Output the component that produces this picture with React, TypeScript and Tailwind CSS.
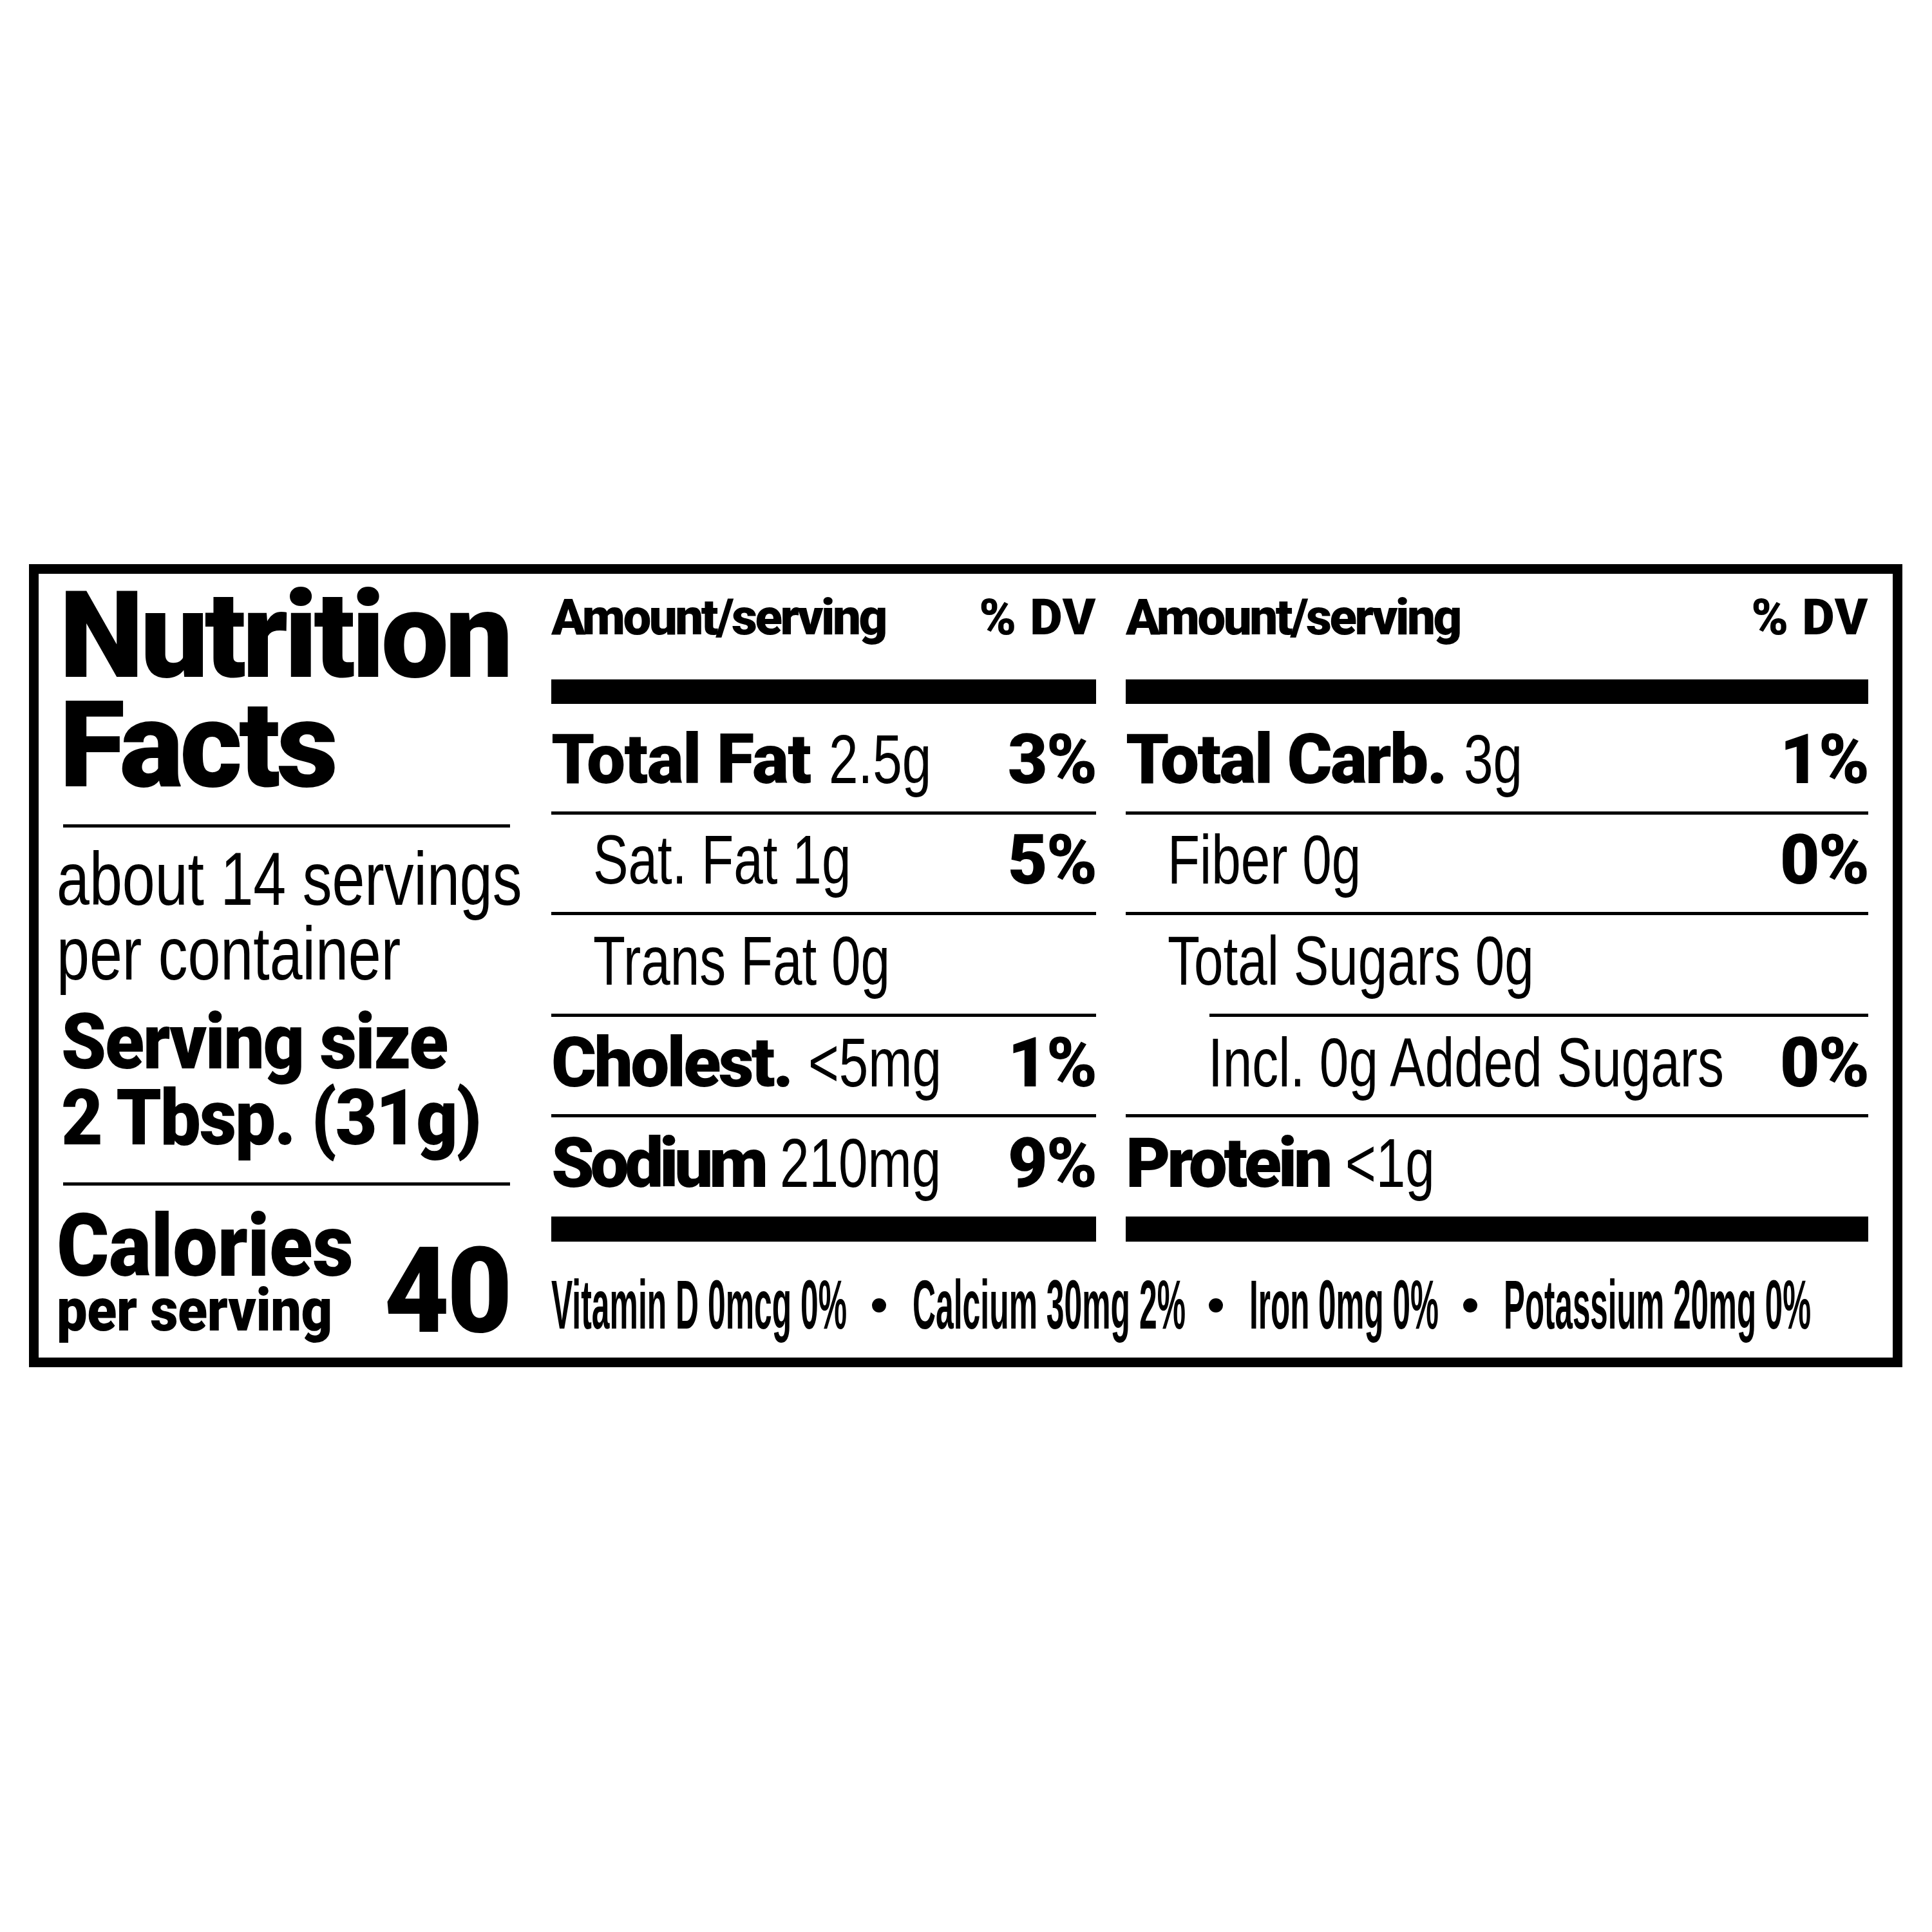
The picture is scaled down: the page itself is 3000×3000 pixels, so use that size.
const heavy = "font-['Roboto','Liberation_Sans',sans-serif] font-black";
const plain = "font-['Liberation_Sans','Arial',sans-serif] font-normal";
const plainBold = "font-['Liberation_Sans','Arial',sans-serif] font-bold";

const Rule = ({ className = "" }: { className?: string }) => <div className={`h-[5px] bg-black ${className}`} />;

type RowProps = {
  name?: string;
  nameTrack?: string;
  amount: string;
  dv?: string;
  className: string;
};

// one nutrient line: bold name, condensed amount, bold %DV at the right
const Row = ({ name, nameTrack = "tracking-[-0.035em]", amount, dv, className }: RowProps) => (
  <div className={`flex justify-between whitespace-nowrap text-[107px] leading-none ${plain} ${className}`}>
    <span className="min-w-0">
      {name && <span className={`${heavy} ${nameTrack}`}>{name} </span>}
      <span className={`inline-block origin-left scale-x-[0.765] ${name ? "ml-[4px]" : ""}`}>{amount}</span>
    </span>
    {dv && <span className={`${heavy} tracking-[-0.02em] shrink-0`}>{dv}</span>}
  </div>
);

const Header = () => (
  <div className={`h-[164px] pt-[29px] flex justify-between text-[78px] leading-none ${heavy}`}>
    <span className="tracking-[-0.045em]">Amount/serving</span>
    <span className="tracking-[0.01em]">% DV</span>
  </div>
);

const LeftPanel = () => (
  <div className="w-[694px] flex flex-col pt-[12px] whitespace-nowrap">
    <h1 className={`${heavy} text-[187px] leading-[170px] tracking-[-0.03em] -ml-[6px]`}>
      Nutrition
      <br />
      Facts
    </h1>
    <Rule className="mt-[37px]" />
    <p className={`${plain} text-[116px] leading-[116.5px] mt-[21.5px] -ml-[10px] origin-left scale-x-[0.789]`}>
      about 14 servings
      <br />
      per container
    </p>
    <p className={`${heavy} text-[120px] leading-[118px] tracking-[-0.02em] mt-[19px] -ml-[3px] origin-left scale-x-[0.935]`}>
      Serving size
      <br />
      2 Tbsp. (31g)
    </p>
    <Rule className="mt-[41px]" />
    <div className="mt-[34px] flex items-end justify-between">
      <div className={`${heavy} min-w-0 tracking-[-0.03em] -ml-[10px] origin-left scale-x-[0.92]`}>
        <p className="text-[135px] leading-[120px]">Calories</p>
        <p className="text-[92px] leading-[80px]">per serving</p>
      </div>
      <p className={`${heavy} shrink-0 text-[186px] leading-[142px] tracking-[-0.02em] origin-right scale-x-[0.94]`}>40</p>
    </div>
  </div>
);

const LeftTable = () => (
  <div className="w-[846px] flex flex-col">
    <Header />
    <div className="h-[38px] bg-black" />
    <Row name="Total Fat" nameTrack="tracking-[-0.015em]" amount="2.5g" dv="3%" className="h-[167px] pt-[33px]" />
    <Rule />
    <Row amount="Sat. Fat 1g" dv="5%" className="h-[151px] pt-[17px] pl-[65px]" />
    <Rule />
    <Row amount="Trans Fat 0g" className="h-[153px] pt-[18px] pl-[65px]" />
    <Rule />
    <Row name="Cholest." amount="<5mg" dv="1%" className="h-[151px] pt-[18px]" />
    <Rule />
    <Row name="Sodium" nameTrack="tracking-[-0.06em]" amount="210mg" dv="9%" className="h-[154px] pt-[18px]" />
    <div className="h-[39px] bg-black" />
  </div>
);

const RightTable = () => (
  <div className="w-[1153px] flex flex-col">
    <Header />
    <div className="h-[38px] bg-black" />
    <Row name="Total Carb." nameTrack="tracking-[-0.025em]" amount="3g" dv="1%" className="h-[167px] pt-[33px]" />
    <Rule />
    <Row amount="Fiber 0g" dv="0%" className="h-[151px] pt-[17px] pl-[65px]" />
    <Rule />
    <Row amount="Total Sugars 0g" className="h-[153px] pt-[18px] pl-[65px]" />
    <Rule className="ml-[130px]" />
    <Row amount="Incl. 0g Added Sugars" dv="0%" className="h-[151px] pt-[18px] pl-[128px]" />
    <Rule />
    <Row name="Protein" nameTrack="tracking-[-0.05em]" amount="<1g" className="h-[154px] pt-[18px]" />
    <div className="h-[39px] bg-black" />
  </div>
);

const Dot = () => <span className="w-[22px] h-[22px] rounded-full bg-black shrink-0" />;

const Vitamins = () => (
  <div className={`mt-[45px] flex items-center gap-[41px] text-[107px] leading-none whitespace-nowrap ${plainBold}`}>
    <div className="w-[457px] shrink-0">
      <span className="inline-block origin-left scale-x-[0.466]">Vitamin D 0mcg 0%</span>
    </div>
    <Dot />
    <div className="w-[419px] shrink-0">
      <span className="inline-block origin-left scale-x-[0.466]">Calcium 30mg 2%</span>
    </div>
    <Dot />
    <div className="w-[291px] shrink-0">
      <span className="inline-block origin-left scale-x-[0.462]">Iron 0mg 0%</span>
    </div>
    <Dot />
    <div className="w-[473px] shrink-0">
      <span className="inline-block origin-left scale-x-[0.461]">Potassium 20mg 0%</span>
    </div>
  </div>
);

export default function App() {
  return (
    <div className="w-[3000px] h-[3000px] overflow-hidden bg-white pt-[876px] pl-[45px] text-black">
      <div className="w-[2909px] h-[1247px] border-[15px] border-black flex px-[38px]">
        <LeftPanel />
        <div className="ml-[64px] w-[2045px] flex flex-col">
          <div className="flex gap-[46px]">
            <LeftTable />
            <RightTable />
          </div>
          <Vitamins />
        </div>
      </div>
    </div>
  );
}
